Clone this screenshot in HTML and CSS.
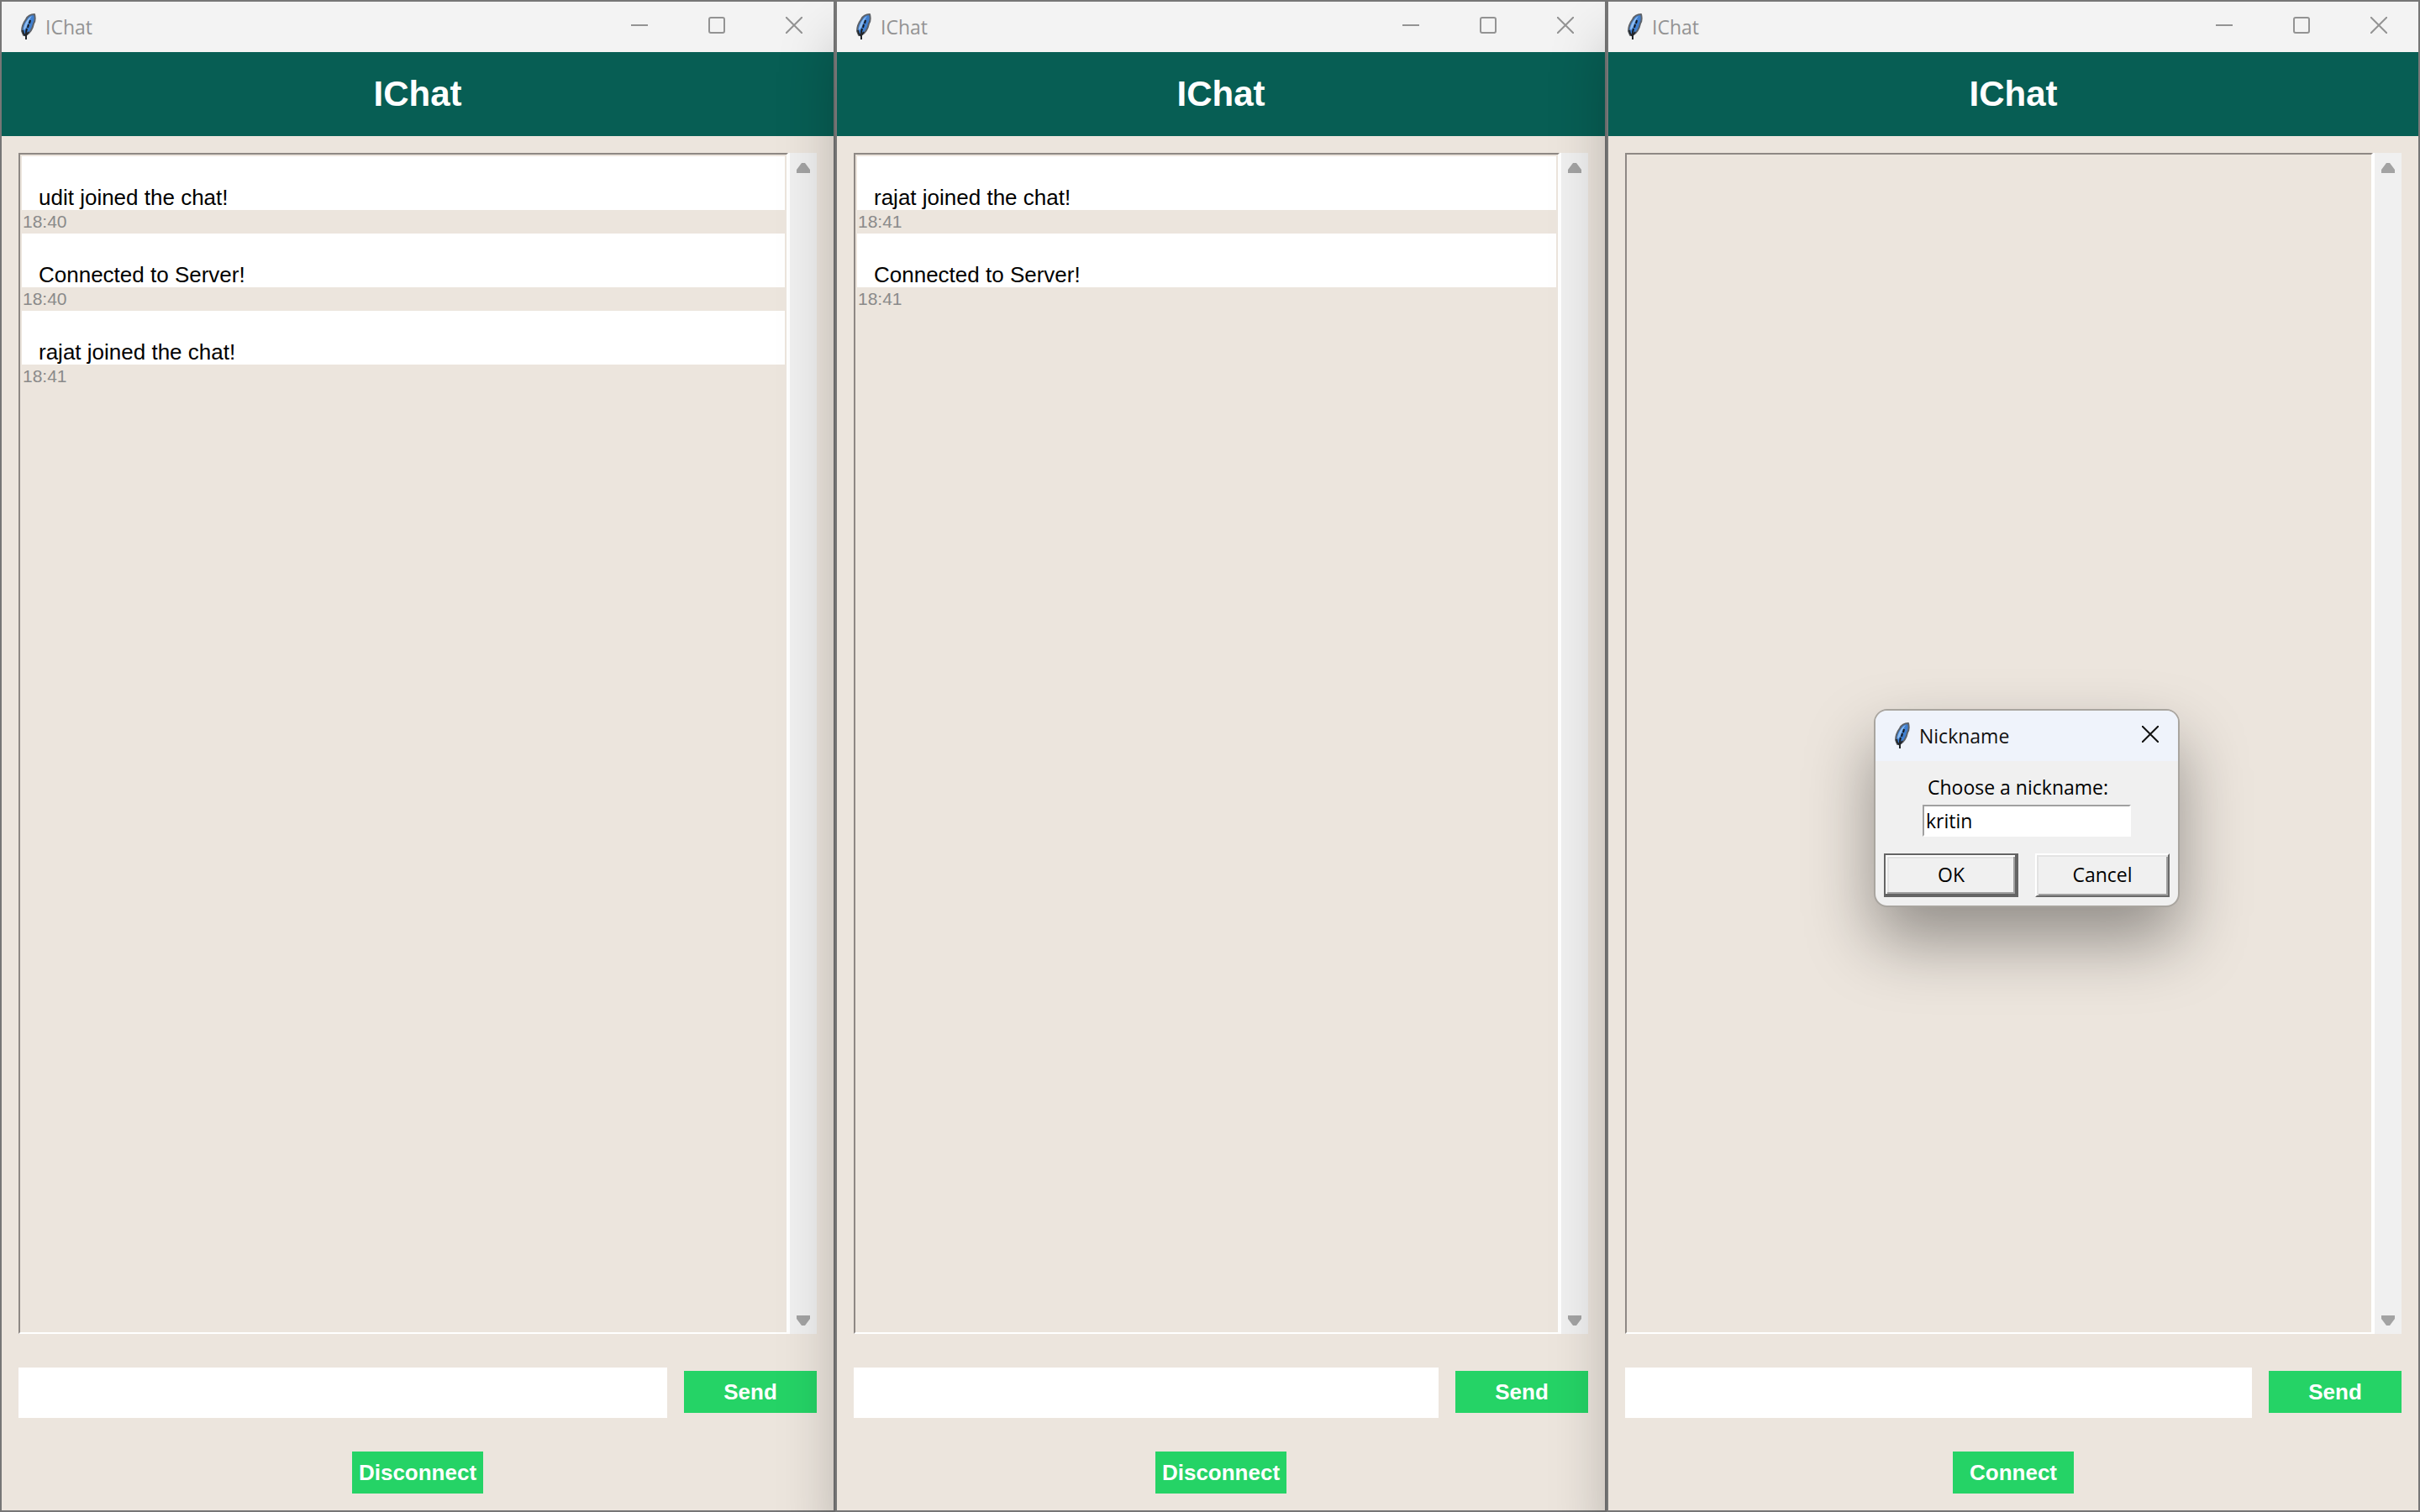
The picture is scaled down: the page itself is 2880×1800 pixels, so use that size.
FILE: index.html
```html
<!DOCTYPE html>
<html lang="en">
<head>
<meta charset="utf-8">
<title>IChat</title>
<link rel="stylesheet" href="styles.css">
</head>
<body>
<svg class="defs" aria-hidden="true">
  <symbol id="feather" viewBox="0 0 18 32">
    <path d="M16 1C12 1 8 3 6 7C3 11 1 16 1 21L3 26L6 26C11 23 14 17 15 12C17 9 17 5 16 1Z" fill="#3f7fd0" stroke="#5d6269" stroke-width="2" stroke-linejoin="round"/>
    <path d="M13 3C9 5 5 10 3 18L4 20L7 15C8 11 10 7 13 3Z" fill="#8fbdf0"/>
    <path d="M11 8L10 12M9 13L8 17M7 18L6 22" fill="none" stroke="#15181d" stroke-width="2"/>
    <path d="M2 20L3 24L6 27M9 22L6 26M6 22V31" fill="none" stroke="#22262b" stroke-width="2"/>
  </symbol>
  <symbol id="minimize" viewBox="0 0 20 20"><path d="M0 10H20" fill="none" stroke="currentColor" stroke-width="2"/></symbol>
  <symbol id="maximize" viewBox="0 0 20 20"><rect x="1" y="1" width="18" height="18" rx="2" fill="none" stroke="currentColor" stroke-width="2"/></symbol>
  <symbol id="close" viewBox="0 0 20 20"><path d="M0 0L20 20M20 0L0 20" fill="none" stroke="currentColor" stroke-width="2"/></symbol>
  <symbol id="up" viewBox="0 0 16 12"><path d="M6 0H10L16 8V12H0V8Z" fill="currentColor"/></symbol>
  <symbol id="down" viewBox="0 0 16 12"><path d="M0 0H16V4L10 12H6L0 4Z" fill="currentColor"/></symbol>
</svg>

<main class="desktop">
  <section class="window" aria-label="IChat, udit">
    <div class="titlebar">
      <svg class="feather"><use href="#feather"/></svg>
      <span class="caption">IChat</span>
      <button class="control" aria-label="Minimize"><svg class="glyph"><use href="#minimize"/></svg></button>
      <button class="control" aria-label="Maximize"><svg class="glyph"><use href="#maximize"/></svg></button>
      <button class="control" aria-label="Close"><svg class="glyph"><use href="#close"/></svg></button>
    </div>
    <h1 class="banner">IChat</h1>
    <div class="history">
      <div class="log">
        <p class="message">udit joined the chat!</p>
        <time class="stamp">18:40</time>
        <p class="message">Connected to Server!</p>
        <time class="stamp">18:40</time>
        <p class="message">rajat joined the chat!</p>
        <time class="stamp">18:41</time>
      </div>
      <div class="scrollbar">
        <button class="arrow" aria-label="Scroll up"><svg class="triangle"><use href="#up"/></svg></button>
        <button class="arrow" aria-label="Scroll down"><svg class="triangle"><use href="#down"/></svg></button>
      </div>
    </div>
    <form class="composer">
      <input class="entry" type="text" aria-label="Message">
      <button class="action send" type="button">Send</button>
    </form>
    <button class="action link">Disconnect</button>
  </section>

  <section class="window" aria-label="IChat, rajat">
    <div class="titlebar">
      <svg class="feather"><use href="#feather"/></svg>
      <span class="caption">IChat</span>
      <button class="control" aria-label="Minimize"><svg class="glyph"><use href="#minimize"/></svg></button>
      <button class="control" aria-label="Maximize"><svg class="glyph"><use href="#maximize"/></svg></button>
      <button class="control" aria-label="Close"><svg class="glyph"><use href="#close"/></svg></button>
    </div>
    <h1 class="banner">IChat</h1>
    <div class="history">
      <div class="log">
        <p class="message">rajat joined the chat!</p>
        <time class="stamp">18:41</time>
        <p class="message">Connected to Server!</p>
        <time class="stamp">18:41</time>
      </div>
      <div class="scrollbar">
        <button class="arrow" aria-label="Scroll up"><svg class="triangle"><use href="#up"/></svg></button>
        <button class="arrow" aria-label="Scroll down"><svg class="triangle"><use href="#down"/></svg></button>
      </div>
    </div>
    <form class="composer">
      <input class="entry" type="text" aria-label="Message">
      <button class="action send" type="button">Send</button>
    </form>
    <button class="action link">Disconnect</button>
  </section>

  <section class="window" aria-label="IChat, not connected">
    <div class="titlebar">
      <svg class="feather"><use href="#feather"/></svg>
      <span class="caption">IChat</span>
      <button class="control" aria-label="Minimize"><svg class="glyph"><use href="#minimize"/></svg></button>
      <button class="control" aria-label="Maximize"><svg class="glyph"><use href="#maximize"/></svg></button>
      <button class="control" aria-label="Close"><svg class="glyph"><use href="#close"/></svg></button>
    </div>
    <h1 class="banner">IChat</h1>
    <div class="history">
      <div class="log"></div>
      <div class="scrollbar">
        <button class="arrow" aria-label="Scroll up"><svg class="triangle"><use href="#up"/></svg></button>
        <button class="arrow" aria-label="Scroll down"><svg class="triangle"><use href="#down"/></svg></button>
      </div>
    </div>
    <form class="composer">
      <input class="entry" type="text" aria-label="Message">
      <button class="action send" type="button">Send</button>
    </form>
    <button class="action link">Connect</button>

    <div class="dialog" role="dialog" aria-label="Nickname">
      <div class="titlebar active">
        <svg class="feather"><use href="#feather"/></svg>
        <span class="caption">Nickname</span>
        <button class="control narrow" aria-label="Close"><svg class="glyph"><use href="#close"/></svg></button>
      </div>
      <form class="prompt">
        <label class="prompt-label" for="nickname">Choose a nickname:</label>
        <input class="prompt-entry" id="nickname" type="text" value="kritin">
        <div class="choices">
          <button class="choice default" type="button">OK</button>
          <button class="choice" type="button">Cancel</button>
        </div>
      </form>
    </div>
  </section>
</main>
</body>
</html>
```
FILE: styles.css
```css
* {
  box-sizing: border-box;
}

body {
  margin: 0;
  font-family: "Liberation Sans", Arial, sans-serif;
  font-size: 26px;
  color: #000;
}

button,
input {
  margin: 0;
  padding: 0;
  border: 0;
  border-radius: 0;
  font: inherit;
  color: inherit;
}

button {
  background: none;
}

.defs {
  display: none;
}

.desktop {
  display: grid;
  grid-template-columns: 994fr 918fr 968fr;
  min-height: 100vh;
  overflow: hidden;
}

.window {
  position: relative;
  display: flex;
  flex-direction: column;
  border: 2px solid #767676;
  background: #ece5dd;
  box-shadow: 0 48px 64px rgba(0, 0, 0, 0.22);
}

/* Title bars */

.titlebar {
  display: flex;
  align-items: center;
  height: 60px;
  padding: 0 1px 0 23px;
  background: #f3f3f3;
  color: #939393;
  font-family: "Open Sans", "Noto Sans", sans-serif;
  font-size: 23px;
}

.feather {
  width: 18px;
  height: 32px;
  margin-right: 11px;
}

.caption {
  flex: 1;
  line-height: 60px;
}

.control {
  display: flex;
  justify-content: center;
  width: 92px;
  height: 60px;
  padding-top: 18px;
}

.narrow {
  width: 64px;
}

.glyph {
  width: 20px;
  height: 20px;
}

/* Chat window */

.banner {
  margin: 0;
  background: #075e54;
  color: #fff;
  font-size: 42px;
  line-height: 100px;
  text-align: center;
}

.history {
  flex: 1;
  display: flex;
  margin: 20px 20px 0;
}

.log {
  flex: 1;
  padding: 2px;
  border: 2px solid;
  border-color: #8e8884 #fff #fff #8e8884;
}

.message {
  margin: 0;
  padding: 34px 20px 0;
  background: #fff;
  line-height: 30px;
}

.stamp {
  display: block;
  padding-left: 1px;
  color: #8a8a8a;
  font-size: 21px;
  line-height: 28px;
}

.scrollbar {
  display: flex;
  flex-direction: column;
  justify-content: space-between;
  width: 34px;
  padding: 12px 0 10px;
  border-left: 2px solid #fff;
  background: #f0f0f0;
}

.arrow {
  display: flex;
  justify-content: center;
  color: #a3a3a3;
}

.triangle {
  width: 16px;
  height: 12px;
}

.composer {
  display: flex;
  align-items: center;
  gap: 20px;
  margin: 40px 20px;
}

.entry {
  flex: 1;
  min-width: 0;
  height: 60px;
  padding: 0 10px;
  background: #fff;
}

.action {
  height: 50px;
  padding: 0 8px;
  background: #25d366;
  color: #fff;
  font-weight: bold;
  line-height: 50px;
}

.send {
  width: 158px;
  margin-bottom: 2px;
}

.link {
  align-self: center;
  min-width: 144px;
  margin-bottom: 20px;
}

/* Nickname dialog */

.dialog {
  position: absolute;
  top: 842px;
  left: 316px;
  width: 364px;
  border: 2px solid #a9a59f;
  border-radius: 16px;
  background: #f0f0f0;
  box-shadow: 0 40px 80px rgba(0, 0, 0, 0.38);
  overflow: hidden;
  font-family: "Open Sans", "Noto Sans", sans-serif;
  font-size: 23px;
}

.active {
  background: #eff3fb;
  color: #111;
}

.prompt {
  display: flex;
  flex-direction: column;
  align-items: center;
  padding: 14px 10px 10px;
}

.prompt-label {
  width: 248px;
  padding-left: 6px;
  line-height: 34px;
}

.prompt-entry {
  width: 248px;
  height: 38px;
  margin-top: 4px;
  padding: 0 2px;
  border: 2px solid;
  border-color: #a0a0a0 #fff #fff #a0a0a0;
  background: #fff;
}

.choices {
  display: flex;
  gap: 20px;
  width: 100%;
  margin-top: 20px;
}

.choice {
  flex: 1;
  height: 52px;
  padding-bottom: 2px;
  border: 2px solid;
  border-color: #fff #696969 #696969 #fff;
  box-shadow: inset 2px 2px #e3e3e3, inset -2px -2px #a0a0a0;
}

.default {
  border-color: #646464;
  box-shadow: inset -2px -2px #646464, inset 2px 2px #fff, inset -4px -4px #a0a0a0, inset 4px 4px #e3e3e3;
}
```
